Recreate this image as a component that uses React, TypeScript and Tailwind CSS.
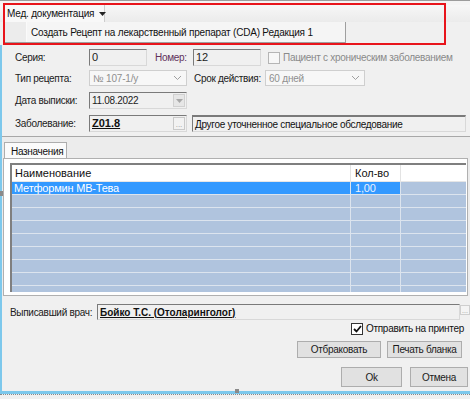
import React from 'react';

const Label: React.FC<{ w: string; children: React.ReactNode; className?: string }> = ({ w, children, className }) => (
  <div className={`${w} shrink-0 h-full flex items-center whitespace-nowrap text-[10px] tracking-[-0.3px] ${className ?? 'text-[#202020]'}`}>{children}</div>
);

const Sunken: React.FC<{ w: string; children?: React.ReactNode; className?: string }> = ({ w, children, className }) => (
  <div className={`${w} shrink-0 h-full border border-t-[#7a7a7a] border-l-[#7a7a7a] border-r-[#d8d8d8] border-b-[#d8d8d8] bg-[#f0f0f0] flex items-center pl-[2px] overflow-hidden whitespace-nowrap ${className ?? ''}`}>
    {children}
  </div>
);

const Chevron: React.FC = () => (
  <svg width="9" height="6" viewBox="0 0 9 6" className="shrink-0">
    <path d="M1 1 L4.5 4.5 L8 1" fill="none" stroke="#a0a0a0" strokeWidth="1" />
  </svg>
);

const Combo: React.FC<{ w: string; text: string }> = ({ w, text }) => (
  <div className={`${w} shrink-0 h-full border border-[#cfcfcf] bg-[#f7f7f7] flex items-center justify-between pl-[3px] pr-[4px] text-[10px] tracking-[-0.2px] text-[#8f8f8f] whitespace-nowrap`}>
    <span>{text}</span>
    <Chevron />
  </div>
);

const Btn: React.FC<{ w: string; h: string; children: React.ReactNode }> = ({ w, h, children }) => (
  <div className={`${w} ${h} shrink-0 border border-[#adadad] bg-[#e1e1e1] flex items-center justify-center whitespace-nowrap text-[10px] tracking-[-0.3px] text-[#1a1a1a]`}>
    {children}
  </div>
);

const rows = Array.from({ length: 9 }, (_, i) => i);

export default function App() {
  return (
    <div className="w-[470px] h-[399px] bg-[#f0f0f0] relative overflow-hidden font-['Liberation_Sans',Arial,sans-serif]">
      {/* title strip */}
      <div className="h-[1px] bg-[#9c9c9c]" />
      <div className="h-[4px] bg-[#f4f4f4]" />

      {/* menu bar */}
      <div className="h-[17px] flex pl-[5px] bg-gradient-to-b from-[#f7f7f7] to-[#ebebeb]">
        <div className="w-[100px] shrink-0 h-full flex items-center pl-[2px] gap-[5px] bg-[#f8f8f8] border-r border-[#cdcdcd] text-[10px] tracking-[-0.2px] text-[#111] whitespace-nowrap">
          <span>Мед. документация</span>
          <svg width="7" height="4" viewBox="0 0 7 4" className="shrink-0"><path d="M0 0 H7 L3.5 4 Z" fill="#222" /></svg>
        </div>
        <div className="flex-1" />
      </div>

      {/* dropdown */}
      <div className="h-[21px] ml-[5px] w-[341px] flex border-r border-b border-[#9f9f9f] bg-[#f5f5f5]">
        <div className="w-[22px] shrink-0 h-full bg-[#ececec] border-r border-[#fafafa]" />
        <div className="flex items-center pl-[4px] text-[10px] tracking-[-0.2px] text-[#111] whitespace-nowrap">
          Создать Рецепт на лекарственный препарат (CDA) Редакция 1
        </div>
      </div>
      <div className="h-[2px]" />

      {/* form */}
      <div className="h-[349px] border-l-2 border-b-[3px] border-[#7dc8ec] flex flex-col">
        <div className="h-[17px] mt-[4px] flex pl-[13px]">
          <Label w="w-[74px]">Серия:</Label>
          <Sunken w="w-[58px]" className="text-[11px] text-[#222]">0</Sunken>
          <Label w="w-[38px] ml-[8px]" className="text-[#62305a]">Номер:</Label>
          <Sunken w="w-[68px]" className="text-[11px] text-[#222]">12</Sunken>
          <div className="ml-[7px] flex items-center">
            <div className="w-[12px] h-[12px] shrink-0 border border-[#b5b5b5] bg-[#f7f7f7]" />
            <span className="ml-[3px] text-[10px] tracking-[-0.3px] text-[#8a8a8a] whitespace-nowrap">Пациент с хроническим заболеванием</span>
          </div>
        </div>

        <div className="h-[16px] mt-[4px] flex pl-[13px]">
          <Label w="w-[74px]">Тип рецепта:</Label>
          <Combo w="w-[98px]" text="№ 107-1/у" />
          <Label w="w-[71px] ml-[7px]">Срок действия:</Label>
          <Combo w="w-[100px]" text="60 дней" />
        </div>

        <div className="h-[17px] mt-[6px] flex pl-[13px]">
          <Label w="w-[74px]">Дата выписки:</Label>
          <Sunken w="w-[98px] justify-between" className="text-[10px] tracking-[-0.3px] text-[#222] pr-[1px]">
            <span>11.08.2022</span>
            <div className="w-[12px] h-[13px] bg-[#e6e6e6] border border-[#d0d0d0] flex items-center justify-center">
              <svg width="7" height="4" viewBox="0 0 7 4"><path d="M0 0 H7 L3.5 4 Z" fill="#a8a8a8" /></svg>
            </div>
          </Sunken>
        </div>

        <div className="h-[17px] mt-[6px] flex pl-[13px]">
          <Label w="w-[74px]">Заболевание:</Label>
          <Sunken w="w-[98px] justify-between" className="pr-[1px]">
            <span className="text-[11px] font-bold underline text-[#111]">Z01.8</span>
            <div className="w-[12px] h-[13px] bg-[#f2f2f2] border border-[#c9c9c9] flex items-end justify-center text-[8px] leading-[9px] text-[#999]">...</div>
          </Sunken>
          <Sunken w="w-[274px] ml-[5px] border-t-2" className="text-[10px] tracking-[-0.3px] text-[#111]">Другое уточненное специальное обследование</Sunken>
        </div>

        {/* tabs */}
        <div className="mt-[4px] border-t border-[#a8a8a8] bg-[#ececec] pt-[5px]">
          <div className="ml-[2px] w-[63px] h-[17px] bg-[#fbfbfb] border border-b-0 border-[#adadad] flex items-center pl-[6px] text-[10px] tracking-[-0.3px] text-[#111] whitespace-nowrap">
            Назначения
          </div>
          <div className="ml-[1px] mr-[2px] h-[138px] border border-[#b0b0b0] bg-white pt-[4px] pl-[6px] -mt-[1px]">
            <div className="w-[456px] h-[129px] border-t-2 border-l-2 border-[#7f7f7f] bg-[#b0c4de] overflow-hidden">
              <div className="h-[17px] bg-white flex text-[11px] text-[#111] border-b border-[#e6e6e6]">
                <div className="w-[339px] shrink-0 pl-[3px] flex items-center border-r border-[#e3e3e3]">Наименование</div>
                <div className="w-[50px] shrink-0 pl-[4px] flex items-center border-r border-[#e3e3e3]">Кол-во</div>
                <div className="flex-1" />
              </div>
              {rows.map((i) => (
                <div key={i} className="h-[13px] flex border-b border-[#dce4ee] text-[11px] tracking-[-0.2px]">
                  <div className={`w-[339px] shrink-0 pl-[2px] flex items-center border-r border-[#dce4ee] whitespace-nowrap ${i === 0 ? 'bg-[#3399ff] text-white' : ''}`}>
                    {i === 0 ? 'Метформин МВ-Тева' : ''}
                  </div>
                  <div className={`w-[50px] shrink-0 pl-[4px] flex items-center border-r border-[#dce4ee] ${i === 0 ? 'bg-[#3399ff] text-[#e8f2ff]' : ''}`}>
                    {i === 0 ? '1,00' : ''}
                  </div>
                  <div className="flex-1" />
                </div>
              ))}
            </div>
          </div>
        </div>

        {/* doctor */}
        <div className="h-[16px] mt-[8px] flex pl-[8px]">
          <Label w="w-[87px]">Выписавший врач:</Label>
          <Sunken w="w-[363px]" className="text-[10px] font-bold underline text-[#111]">Бойко Т.С. (Отоларинголог)</Sunken>
          <div className="w-[10px] shrink-0 h-[10px] mt-[1px] bg-[#f4f4f4] border border-[#cfcfcf] text-[7px] leading-[7px] text-[#999] flex items-end justify-center">...</div>
        </div>

        <div className="h-[13px] mt-[2px] flex items-center pl-[349px]">
          <div className="w-[12px] h-[12px] shrink-0 border border-[#333] bg-white flex items-center justify-center">
            <svg width="9" height="8" viewBox="0 0 9 8"><path d="M1 4 L3.5 6.5 L8 1" fill="none" stroke="#111" strokeWidth="1.8" /></svg>
          </div>
          <span className="ml-[3px] text-[10px] tracking-[-0.3px] text-[#111] whitespace-nowrap">Отправить на принтер</span>
        </div>

        <div className="h-[17px] mt-[6px] flex pl-[295px] gap-[6px]">
          <Btn w="w-[84px]" h="h-[17px]">Отбраковать</Btn>
          <Btn w="w-[75px]" h="h-[17px]">Печать бланка</Btn>
        </div>

        <div className="h-[20px] mt-[9px] flex pl-[339px] gap-[8px]">
          <Btn w="w-[61px]" h="h-[20px]">Ok</Btn>
          <Btn w="w-[58px]" h="h-[20px]">Отмена</Btn>
        </div>
      </div>
      <div className="h-[2px] border-t border-dotted border-[#8a8a8a]" />

      {/* annotation frame */}
      <div className="absolute left-[3px] top-[3px] w-[443px] h-[42px] border-2 border-[#e8141b] pointer-events-none" />
      {/* designer handles */}
      <div className="absolute left-0 top-[191px] w-[3px] h-[5px] bg-[#8a8a8a]" />
      <div className="absolute left-[235px] top-[389px] w-[4px] h-[4px] bg-[#8a8a8a]" />
    </div>
  );
}
